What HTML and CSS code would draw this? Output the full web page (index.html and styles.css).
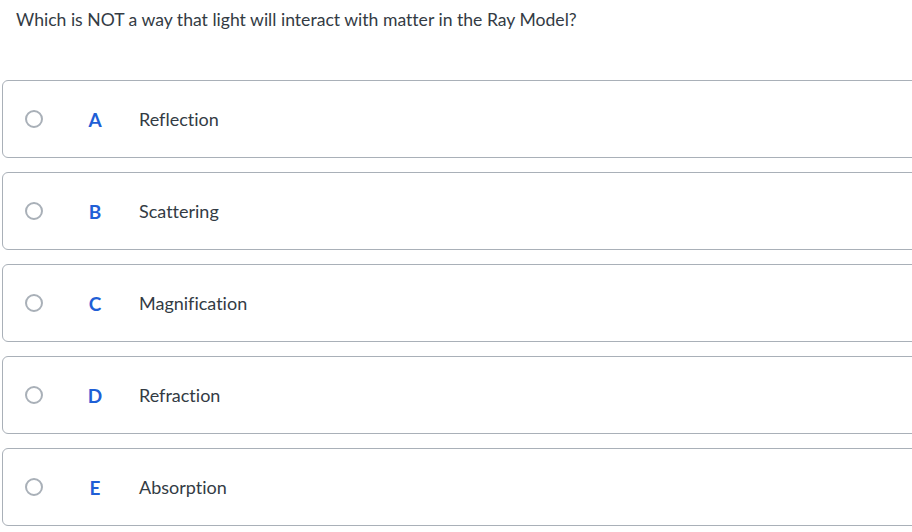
FILE: index.html
```html
<!DOCTYPE html>
<html>
<head>
<meta charset="utf-8">
<link rel="stylesheet" href="styles.css">
</head>
<body>
<div class="quiz">
  <div class="question">Which is NOT a way that light will interact with matter in the Ray Model?</div>
  <div class="options">
    <div class="option"><span class="radio"></span><span class="letter">A</span><span class="label">Reflection</span></div>
    <div class="option"><span class="radio"></span><span class="letter">B</span><span class="label">Scattering</span></div>
    <div class="option"><span class="radio"></span><span class="letter">C</span><span class="label">Magnification</span></div>
    <div class="option"><span class="radio"></span><span class="letter">D</span><span class="label">Refraction</span></div>
    <div class="option"><span class="radio"></span><span class="letter">E</span><span class="label">Absorption</span></div>
  </div>
</div>
</body>
</html>
```
FILE: styles.css
```css
html, body {
  margin: 0;
  padding: 0;
  background: #ffffff;
}
body {
  font-family: "Lato", "Open Sans", sans-serif;
  font-variant-ligatures: none;
  color: #333b44;
  overflow: hidden;
  width: 912px;
  height: 532px;
}
.quiz {
  padding: 8px 0 0 2px;
}
.question {
  font-size: 17.6px;
  line-height: 24px;
  padding-left: 14px;
  height: 72px;
}
.options {
  display: flex;
  flex-direction: column;
  gap: 14px;
  width: 930px;
}
.option {
  display: flex;
  align-items: center;
  height: 76px;
  border: 1px solid #a9b0b8;
  border-radius: 6px;
  box-sizing: content-box;
}
.radio {
  width: 14px;
  height: 14px;
  border: 2px solid #a9b0b8;
  border-radius: 50%;
  margin-left: 22px;
  flex: none;
}
.letter {
  width: 18px;
  margin-left: 43px;
  font-weight: 700;
  font-size: 19px;
  color: #1f5fd6;
  text-align: center;
}
.label {
  margin-left: 35px;
  font-size: 18px;
}
```
